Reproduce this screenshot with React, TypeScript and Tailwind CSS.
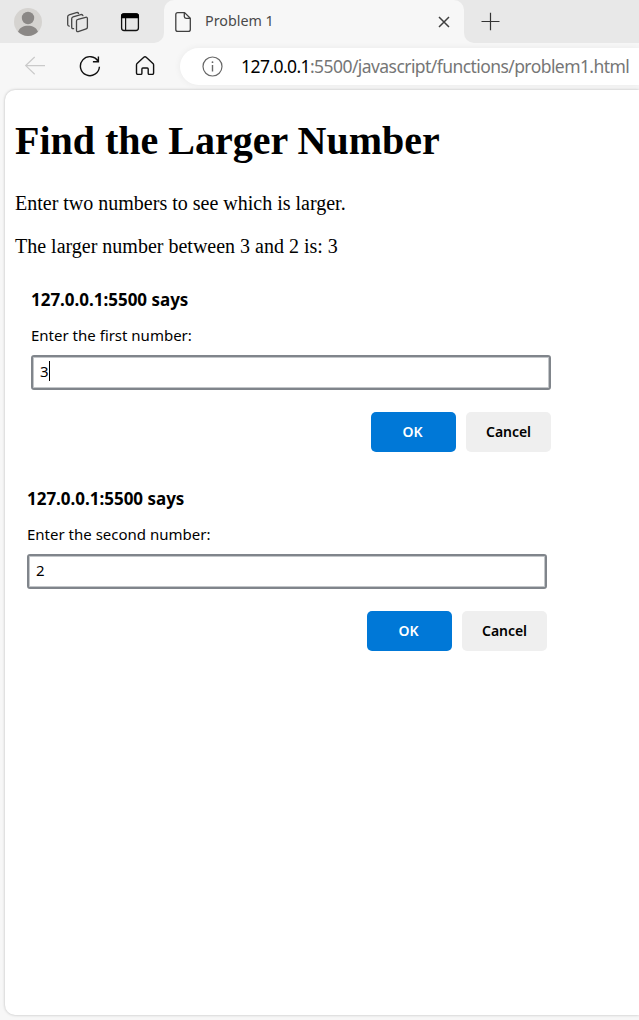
import React from "react";

const sans = "font-['Noto_Sans','Open_Sans',sans-serif]";

function TabStrip() {
  return (
    <header className="flex h-[43px] bg-[#f7f7f7]">
      <div className="flex w-[164px] shrink-0 items-center rounded-br-[10px] bg-[#e8e8e8]">
        <svg className="ml-[14px] size-7 shrink-0" viewBox="0 0 28 28">
          <circle cx="14" cy="14" r="14" fill="#d5d3d0" />
          <circle cx="14" cy="10" r="6.200" fill="#8b8886" />
          <path d="M4 23.800C5.500 19.600 9.500 17.700 14 17.700s8.500 1.900 10 6.100A14 14 0 0 1 4 23.800z" fill="#8b8886" />
        </svg>
        <svg className="ml-6 h-6 w-6 shrink-0" viewBox="66 9 24 24" fill="none" stroke="#464646" strokeWidth="1.300" strokeLinecap="round" strokeLinejoin="round">
          <path d="M78 18.400l7.700-2.100q1.700-.4 1.700 1.300v8.700q0 1.200-1.200 1.600l-8 2.700q-1.700.4-1.700-1.300v-9.200q0-1.400 1.500-1.700z" />
          <path d="M73.600 27.700q-1.900.1-1.900-1.500v-8.400q0-1.500 1.400-1.900l7.700-2.300q1.700-.4 2.100 1.100" />
          <path d="M69.200 25.200q-1.500-.2-1.500-1.700v-7.700q0-1.500 1.400-1.900l7.300-2.300q1.700-.4 2.200.8" />
        </svg>
        <svg className="ml-[30px] h-5 w-5 shrink-0" viewBox="120 11 20 20" fill="none" stroke="#111">
          <rect x="121.600" y="13" width="16.800" height="16.500" rx="2.500" strokeWidth="1.300" />
          <path d="M121 17.300V15q0-2.700 2.700-2.700h12.600q2.700 0 2.700 2.700v2.300z" fill="#000" stroke="none" />
          <path d="M125.600 17v12" strokeWidth="1.200" />
        </svg>
      </div>
      <div className="flex w-[300px] shrink-0 bg-[#e8e8e8]">
        <div className="flex h-[43px] w-[300px] items-center rounded-t-[10px] bg-[#f7f7f7]">
          <svg className="ml-[10px] mt-px h-6 w-[18px] shrink-0" viewBox="174 10 18 24" fill="none" stroke="#404040" strokeWidth="1.300" strokeLinejoin="round">
            <path d="M184.600 12.600h-6.800q-2 0-2 2v14.800q0 2 2 2h10.500q2 0 2-2V18.300zM184.300 12.700v3.900q0 1.800 1.800 1.800h4.100" />
          </svg>
          <span className="-mt-0.5 ml-[13px] text-[14.300px] leading-5 text-[#4a4a4a]">Problem 1</span>
          <svg className="ml-auto mr-[14px] mt-px size-3 shrink-0" viewBox="0 0 12 12" stroke="#404040" strokeWidth="1.500">
            <path d="M1 1l10 10M11 1L1 11" />
          </svg>
        </div>
      </div>
      <div className="flex flex-1 items-center rounded-bl-[10px] bg-[#e8e8e8]">
        <svg className="ml-[17px] size-[19px]" viewBox="0 0 19 19" stroke="#333" strokeWidth="1.200">
          <path d="M.5 9.500h18M9.500 .8v17.400" />
        </svg>
      </div>
    </header>
  );
}

function Toolbar() {
  return (
    <nav className="flex h-[47px] items-start bg-[#f7f7f7]">
      <svg className="ml-[24px] mt-[12px] h-[22px] w-[22px] shrink-0" viewBox="24 55 22 22" fill="none" stroke="#cacaca" strokeWidth="1.200">
        <path d="M45 65.600H26M34.700 57l-9 8.600 9 8.600" />
      </svg>
      <svg className="ml-[33px] mt-[12px] size-[22px] shrink-0" viewBox="79 55 22 22" fill="none" stroke="#111" strokeWidth="1.400">
        <path d="M98.200 61.500a9.500 9.500 0 1 0 1.200 5.200M98.400 56.500v5.300h-5.500" />
      </svg>
      <svg className="ml-[34px] mt-[12px] size-5 shrink-0" viewBox="135 55 20 20" fill="none" stroke="#111" strokeWidth="1.400" strokeLinejoin="round">
        <path d="M136.800 63.800l7-6.500q1.200-1.100 2.400 0l7 6.500q.4.400.4 1.100v8.200q0 1.300-1.300 1.300h-2.900q-1.200 0-1.200-1.200V69q0-1-1-1h-4.300q-1 0-1 1v4.200q0 1.200-1.200 1.200h-2.900q-1.300 0-1.300-1.300v-8.200q0-.7.300-1.100z" />
      </svg>
      <div className="ml-[25px] mt-[5px] flex h-[37px] flex-1 items-center overflow-hidden rounded-l-full bg-white shadow-[0_0_7px_rgba(0,0,0,0.060)]">
        <svg className="ml-[22px] size-[21px] shrink-0" viewBox="0 0 21 21" fill="none" stroke="#686868" strokeWidth="1.200">
          <circle cx="10.500" cy="10.500" r="9.500" />
          <path d="M10.500 9v6.500" strokeWidth="1.400" />
          <circle cx="10.500" cy="6.200" r=".9" fill="#686868" stroke="none" />
        </svg>
        <span className="-mt-0.5 ml-[18px] whitespace-nowrap text-[17.500px] leading-6 tracking-[-0.570px] text-[#767676]">
          <span className="text-black">127.0.0.1</span>:5500/javascript/functions/problem1.html
        </span>
      </div>
    </nav>
  );
}

interface PromptProps {
  label: string;
  value: string;
  focused?: boolean;
}

function Prompt({ label, value, focused }: PromptProps) {
  return (
    <section className={`${sans} flex w-[520px] flex-col text-black`}>
      <h2 className="h-6 whitespace-nowrap text-[17px] font-bold leading-6 tracking-[-0.020px]">127.0.0.1:5500 says</h2>
      <p className="mt-[11px] h-6 whitespace-nowrap text-[15px] leading-6">{label}</p>
      <div className="mt-2 flex h-[35px] items-center rounded-[3px] border-2 border-[#80858b] px-[7px] pb-[3px] shadow-[inset_0_0_0_1px_#c3c6c9]">
        <span className="text-[15px] leading-6">{value}</span>
        {focused && <span className="h-5 w-px bg-black" />}
      </div>
      <div className="mt-[22px] flex justify-end gap-[10px] text-[14px] font-semibold">
        <button className="h-10 w-[85px] rounded-[5px] bg-[#0078d7] pb-0.5 pr-0.5 text-white">OK</button>
        <button className="h-10 w-[85px] rounded-[5px] bg-[#efefef] pb-0.5 tracking-[-0.050px]">Cancel</button>
      </div>
    </section>
  );
}

export default function App() {
  return (
    <div className={`${sans} flex h-[1020px] w-[639px] flex-col overflow-hidden bg-[#f7f7f7]`}>
      <TabStrip />
      <Toolbar />
      <main className="ml-[5px] flex h-[925px] flex-col rounded-l-[10px] bg-white pl-[10px] font-['Liberation_Serif',serif] text-black shadow-[0_0_3px_rgba(0,0,0,0.250)]">
        <h1 className="mt-[28px] text-[40px] font-bold leading-[46px]">Find the Larger Number</h1>
        <p className="mt-[28px] text-[20px] leading-[23px]">Enter two numbers to see which is larger.</p>
        <p className="mt-5 text-[20px] leading-[23px]">The larger number between 3 and 2 is: 3</p>
        <div className="ml-4 mt-[30px]">
          <Prompt label="Enter the first number:" value="3" focused />
        </div>
        <div className="ml-3 mt-[35px]">
          <Prompt label="Enter the second number:" value="2" />
        </div>
      </main>
    </div>
  );
}
